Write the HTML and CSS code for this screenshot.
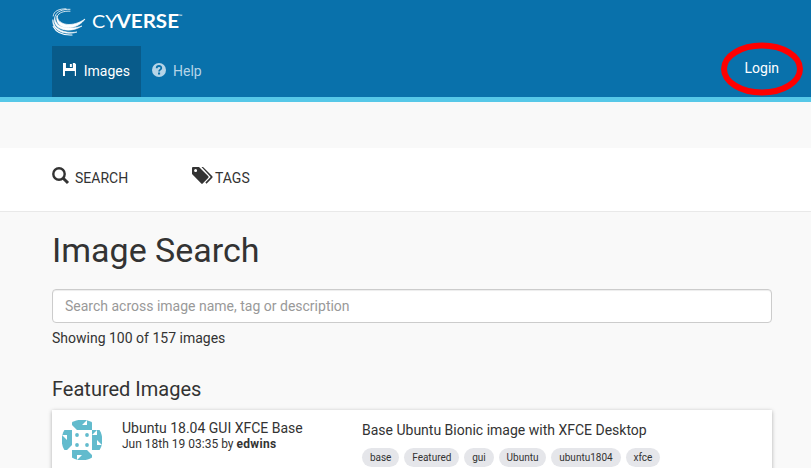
FILE: index.html
```html
<!DOCTYPE html>
<html lang="en">
<head>
<meta charset="utf-8">
<title>Images - CyVerse</title>
<link rel="stylesheet" href="styles.css">
</head>
<body>
<header class="header">
  <a class="brand">
    <svg class="brand-mark" width="34" height="29" viewBox="0 0 34 29" fill="none" stroke="#fff" stroke-linecap="round">
      <path d="M14 .8C7 .8 1.500 3 1.200 8M18 1.300C11 1 4 3.500 3 8.500M18 3.200C12 2.800 6.500 4.500 5.200 8.500" stroke-width=".8"/>
      <path d="M5 8C6 18 21 19.500 33 11C24 24 2 22 5 8Z" fill="#fff" stroke-width=".7"/>
      <path d="M2.800 9.500C3 19.500 16 22.500 30 18C17 26.500 -.5 21 2.800 9.500Z" fill="#fff" stroke-width=".6"/>
      <path d="M.9 12C1.500 20.500 12 26 25 24C12 28.500 -1 21 .9 12Z" fill="#fff" stroke-width=".6"/>
      <path d="M1.200 18.500C4.500 25 11 27.400 20 27" stroke-width="1.100"/>
    </svg>
    <svg class="brand-name" width="92" height="20" viewBox="0 0 92 20">
      <text class="cy" x="0" y="16.500" textLength="25.500" lengthAdjust="spacingAndGlyphs">CY</text>
      <text class="verse" x="24.500" y="16.500" textLength="62.500" lengthAdjust="spacingAndGlyphs">VERSE</text>
      <text class="tm" x="86.500" y="7">™</text>
    </svg>
  </a>
  <nav class="nav">
    <a class="tab active">
      <svg width="14" height="14" viewBox="0 0 14 14"><path fill="#fff" d="M0 0H3V5H10V0H12L14 2V13H12V8H2V13H0ZM7 1H9V4H7Z"/></svg>
      <span>Images</span>
    </a>
    <a class="tab">
      <svg width="14" height="14" viewBox="0 0 14 14"><circle cx="7" cy="7" r="7" fill="#b5d4e7"/><path d="M4.700 5.200C4.700 2.300 9.300 2.300 9.300 5C9.300 6.700 7.100 6.600 7.100 8.500" fill="none" stroke="#0971ab" stroke-width="1.800"/><path d="M6 9.500h2.100v2H6z" fill="#0971ab"/></svg>
      <span>Help</span>
    </a>
    <a class="login">Login
      <svg class="ring" width="84" height="56" viewBox="0 0 84 56"><ellipse cx="42" cy="28" rx="38" ry="23.500" fill="none" stroke="#f00" stroke-width="6"/></svg>
    </a>
  </nav>
</header>
<div class="subnav">
  <a class="subitem search">
    <svg width="18" height="18" viewBox="0 0 18 18" fill="none" stroke="#333"><circle cx="7" cy="7" r="5.700" stroke-width="2.400"/><path d="M11.200 11.200L16 16" stroke-width="3"/></svg>
    <span>SEARCH</span>
  </a>
  <a class="subitem tags">
    <svg width="22" height="18" viewBox="0 0 22 18"><path fill="#333" fill-rule="evenodd" d="M0 1Q0 0 1 0H7L16.300 9.300Q17 10 16.300 10.700L10.700 16.600Q10 17.300 9.300 16.600L0 7ZM3.600 2A1.500 1.500 0 1 0 3.600 5A1.500 1.500 0 1 0 3.600 2Z"/><path d="M9.500 0H11L20.300 9.300Q21 10 20.300 10.700L14.500 16.700L13.400 15.600L18.700 10Z" fill="#333"/></svg>
    <span>TAGS</span>
  </a>
</div>
<main class="content">
  <h1>Image Search</h1>
  <input class="field" type="text" placeholder="Search across image name, tag or description">
  <p class="count">Showing 100 of 157 images</p>
  <h2>Featured Images</h2>
  <article class="card">
    <svg class="avatar" width="40" height="40" viewBox="0 0 40 40">
      <defs><clipPath id="round"><circle cx="20" cy="20" r="20.300"/></clipPath></defs>
      <g clip-path="url(#round)">
        <path fill="#62bbcd" d="M10 0H30V10H40V30H30V40H10V30H0V10H10Z"/>
        <path fill="#fff" d="M10 10H30V30H10ZM10 5L15 10H10ZM20 5L25 0V5ZM30 15L35 10V15ZM35 20L40 25H35ZM30 30V35L25 30ZM20 35L15 40V35ZM10 30H5L10 25ZM5 20L0 15H5Z"/>
        <g fill="#62bbcd"><circle cx="15" cy="15" r="1.900"/><circle cx="25" cy="15" r="1.900"/><circle cx="15" cy="25" r="1.900"/><circle cx="25" cy="25" r="1.900"/></g>
      </g>
    </svg>
    <div class="info">
      <div class="name">Ubuntu 18.04 GUI XFCE Base</div>
      <div class="meta">Jun 18th 19 03:35 by <strong>edwins</strong></div>
    </div>
    <div class="about">
      <div class="desc">Base Ubuntu Bionic image with XFCE Desktop</div>
      <div class="chips"><span>base</span><span>Featured</span><span>gui</span><span>Ubuntu</span><span>ubuntu1804</span><span>xfce</span></div>
    </div>
  </article>
</main>
</body>
</html>
```
FILE: styles.css
```css
* { box-sizing: border-box; }
body { margin: 0; height: 468px; overflow: hidden; background: #f9f9f9; color: #333; font: 14px/20px Roboto, sans-serif; }
.header { height: 102px; background: #0971ab; border-bottom: 5px solid #56c8e8; padding: 0 8px 0 52px; }
.brand { display: flex; height: 46px; padding-top: 8px; }
.brand-name { margin: 3px 0 0 6px; overflow: visible; }
.brand-name text { fill: #fff; font-family: Lato, sans-serif; font-size: 18px; }
.brand-name .cy { font-weight: 400; }
.brand-name .verse { font-weight: 700; }
.brand-name .tm { font-size: 5px; }
.nav { display: flex; height: 51px; }
.tab { display: flex; align-items: center; gap: 7px; padding: 0 11px 2px; color: #b5d4e7; }
.tab svg { margin-top: -1px; }
.tab.active { width: 89px; padding-left: 10.5px; gap: 7.5px; background: #085b8a; color: #fff; }
.login { position: relative; margin-left: auto; width: 84px; padding: 12px 0 0 25.5px; color: #fff; }
.ring { position: absolute; left: 1px; top: -5px; }
.subnav { display: flex; height: 64px; margin-top: 46px; padding: 19px 52px 0; background: #fff; border-bottom: 1px solid #e9e9e9; }
.subitem { display: flex; }
.subitem span { padding-top: 1px; }
.search { width: 140px; gap: 5px; }
.tags { gap: 1px; }
.content { width: 720px; margin-left: 52px; padding-top: 17px; }
h1 { margin: 0 0 17px; font-size: 34px; line-height: 43px; font-weight: 400; }
.field { display: block; width: 720px; height: 34px; padding: 6px 12px; border: 1px solid #ccc; border-radius: 4px; background: #fff; font: 14px/20px Roboto, sans-serif; box-shadow: inset 0 1px 1px rgba(0,0,0,.075); }
.field::placeholder { color: #999; opacity: 1; }
.count { margin: 5px 0 0; }
h2 { margin: 28px 0 7px; font-size: 20px; line-height: 27px; font-weight: 400; }
.card { display: flex; height: 76px; padding: 10px; background: #fff; box-shadow: 0 1px 4px rgba(0,0,0,.3); }
.info { width: 240px; margin-left: 20px; }
.name { line-height: 16px; }
.meta { font-size: 12px; line-height: 16px; }
.meta strong { letter-spacing: .3px; }
.desc { line-height: 20px; }
.chips { display: flex; gap: 5px; margin-top: 8px; }
.chips span { height: 19px; padding: 0 7.9px; border-radius: 10px; background: #e5e6ea; font-size: 10px; line-height: 19px; }
```
